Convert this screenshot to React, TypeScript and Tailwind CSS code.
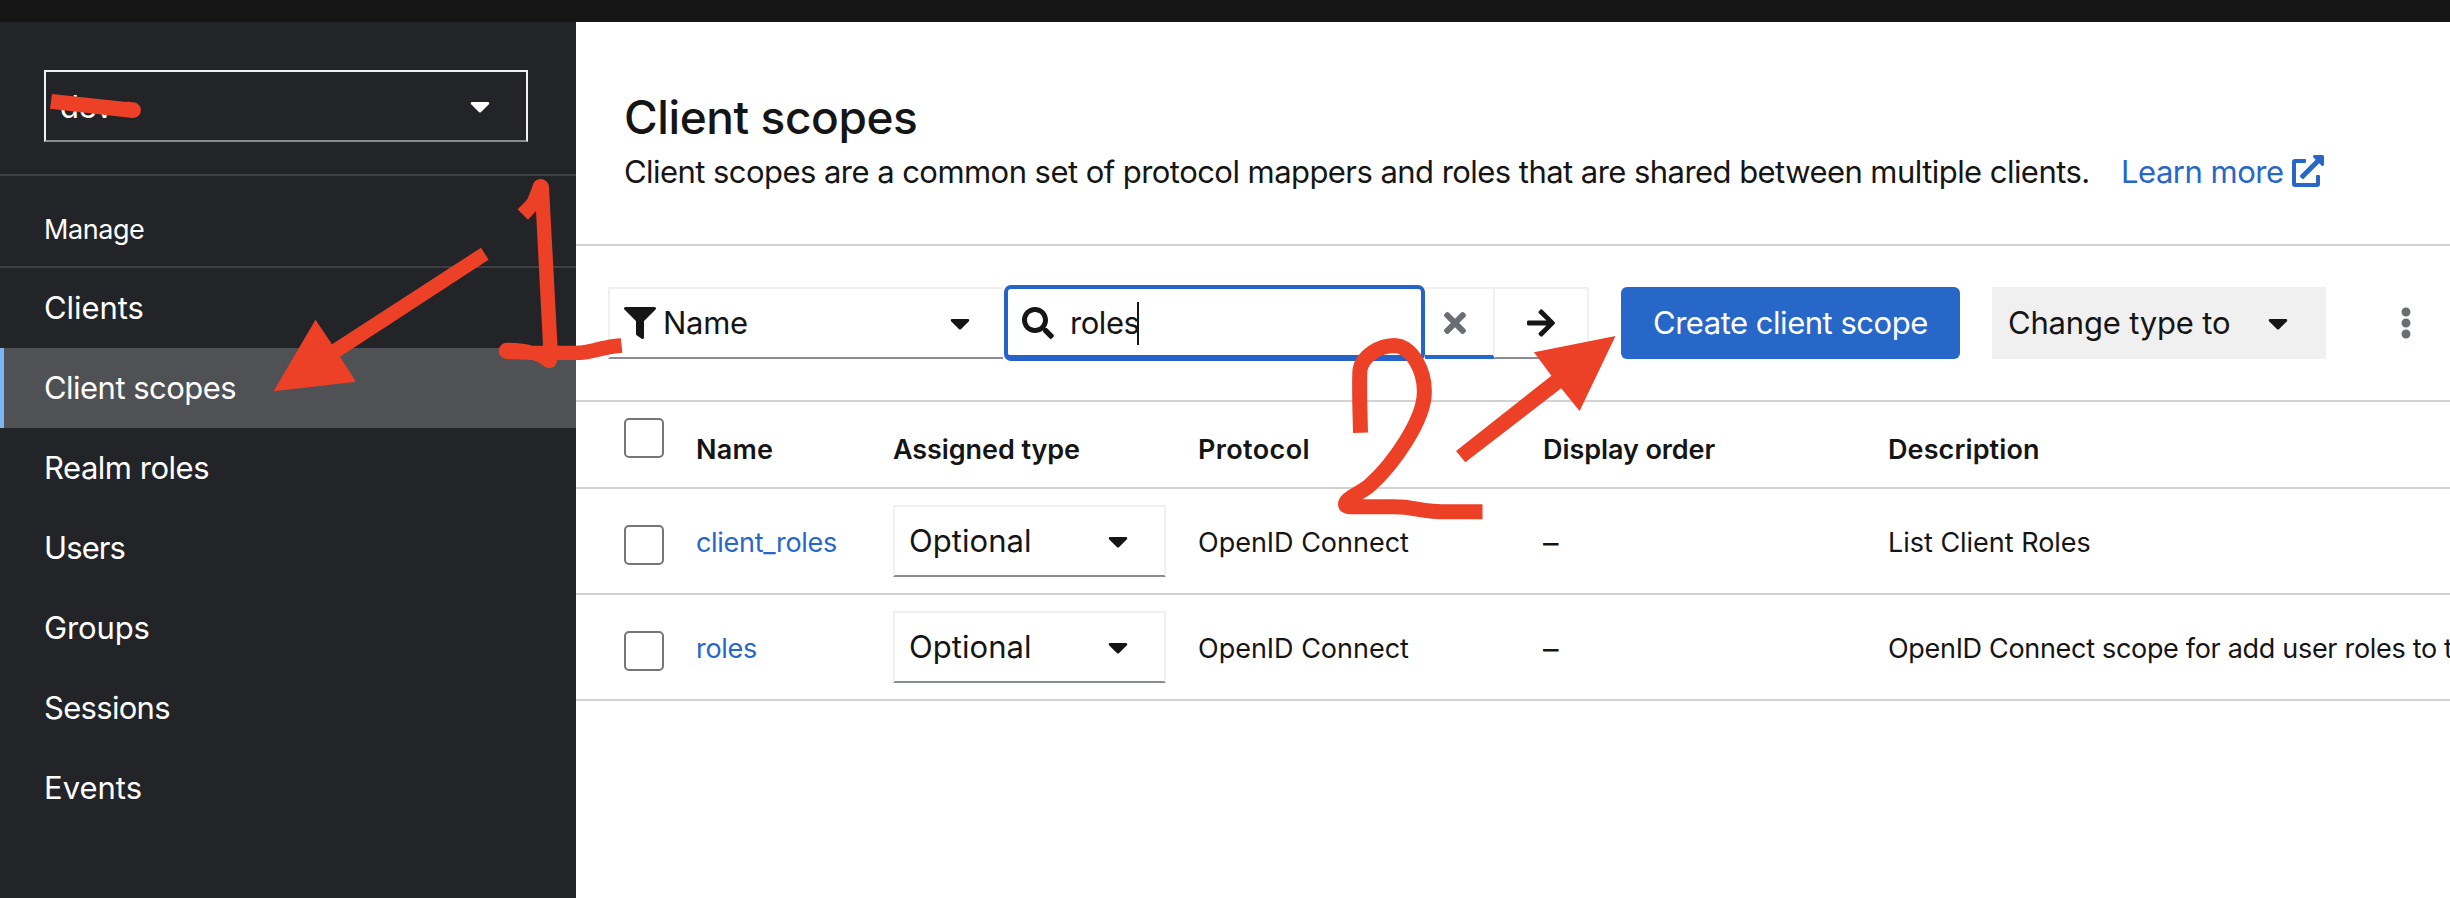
import type { ReactNode } from "react";
import {
  FaArrowRight,
  FaCaretDown,
  FaEllipsisV,
  FaExternalLinkAlt,
  FaFilter,
  FaSearch,
  FaTimes,
} from "react-icons/fa";

const navItems = [
  { label: "Clients", tracking: "tracking-[-0.05px]", active: false },
  { label: "Client scopes", tracking: "tracking-[-0.53px]", active: true },
  { label: "Realm roles", tracking: "tracking-[-0.48px]", active: false },
  { label: "Users", tracking: "tracking-[-0.9px]", active: false },
  { label: "Groups", tracking: "tracking-[-0.12px]", active: false },
  { label: "Sessions", tracking: "tracking-[-0.7px]", active: false },
  { label: "Events", tracking: "tracking-[0px]", active: false },
];

const scopes = [
  {
    name: "client_roles",
    description: "List Client Roles",
    descriptionTracking: "tracking-[-0.02px]",
  },
  {
    name: "roles",
    description: "OpenID Connect scope for add user roles to token",
    descriptionTracking: "tracking-[-0.31px]",
  },
];

function Caret() {
  return <FaCaretDown className="h-8 w-5 shrink-0" />;
}

function Checkbox({ className }: { className: string }) {
  return (
    <span
      role="checkbox"
      aria-checked="false"
      className={`size-10 rounded-[5px] border-2 border-[#767676] bg-white ${className}`}
    />
  );
}

function Cell({ children, className }: { children: ReactNode; className: string }) {
  return <div className={`whitespace-nowrap ${className}`}>{children}</div>;
}

function Sidebar() {
  return (
    <aside className="flex w-[576px] shrink-0 flex-col bg-[#232428] text-white">
      <div className="h-[154px] border-b-2 border-[#3e3f43] px-[44px] pt-12">
        <button className="flex h-[72px] w-[484px] items-center justify-between border-2 border-[#f0f0f0] border-b-[#8a8d90] pr-[36px] pl-[14px]">
          <span className="text-[31px] leading-none tracking-[-0.3px]">dev</span>
          <Caret />
        </button>
      </div>
      <div className="flex h-[92px] items-center border-b-2 border-[#3e3f43] pt-[18px] pl-[44px]">
        <span className="text-[27px] leading-10 tracking-[-0.44px]">Manage</span>
      </div>
      <nav>
        {navItems.map((item) => (
          <a
            key={item.label}
            className={`flex h-20 items-center text-[31px] leading-10 ${item.tracking} ${
              item.active ? "border-l-4 border-[#7bb5f3] bg-[#505154] pl-10" : "pl-[44px]"
            }`}
          >
            {item.label}
          </a>
        ))}
      </nav>
    </aside>
  );
}

function Toolbar() {
  return (
    <div className="flex h-[156px] items-start border-b-2 border-[#d2d2d2] pt-[41px] pl-8">
      <button className="flex h-[72px] w-[395px] items-center border-y-2 border-l-2 border-[#f0f0f0] border-b-[#8a8d90] pr-[33px] pl-[14px]">
        <FaFilter className="size-8" />
        <span className="ml-[7px] text-[31px] leading-10 tracking-[-0.31px]">Name</span>
        <span className="ml-auto flex">
          <Caret />
        </span>
      </button>
      <div className="-mt-0.5 ml-px flex h-[76px] w-[421px] items-center rounded-[7px] border-4 border-b-[6px] border-[#2563c8] pl-[14px]">
        <FaSearch className="mb-[-2px] size-8" />
        <span className="mb-[-2px] ml-4 text-[31px] leading-10 tracking-[-0.45px]">roles</span>
        <span className="mb-[-2px] -ml-0.5 h-[43px] w-0.5 bg-[#151515]" />
      </div>
      <button className="flex h-[72px] w-[70px] items-center border-t-2 border-r-2 border-b-4 border-[#f0f0f0] border-b-[#2668c9] pl-[19px] text-[#6a6e73]">
        <FaTimes className="mt-0.5 h-8 w-[22px]" />
      </button>
      <button className="flex h-[72px] w-[94px] items-center border-y-2 border-r-2 border-[#f0f0f0] border-b-[#8a8d90] pl-8">
        <FaArrowRight className="h-8 w-7" />
      </button>
      <button className="ml-8 flex h-[72px] w-[339px] items-center rounded-md bg-[#2767c8] pl-8 text-[31px] leading-10 tracking-[-0.48px] whitespace-nowrap text-white">
        Create client scope
      </button>
      <button className="ml-8 flex h-[72px] w-[334px] items-center justify-between bg-[#f0f0f0] pr-[38px] pl-4">
        <span className="text-[31px] leading-10 tracking-[-0.18px]">Change type to</span>
        <Caret />
      </button>
      <button className="ml-[74px] flex h-[72px] items-center text-[#6a6e73]">
        <FaEllipsisV className="h-8 w-3" />
      </button>
    </div>
  );
}

const columns = "grid grid-cols-[72px_197px_304px_346px_345px_1fr] border-b-2 border-[#d2d2d2] pl-12";

function ScopeTable() {
  return (
    <div className="text-[27px] leading-10">
      <div className={`${columns} h-[87px] items-start font-semibold`}>
        <Checkbox className="mt-4" />
        <Cell className="mt-7 tracking-[0.23px]">Name</Cell>
        <Cell className="mt-7 tracking-[-0.09px]">Assigned type</Cell>
        <Cell className="mt-7 pl-px tracking-[0.38px]">Protocol</Cell>
        <Cell className="mt-7 tracking-[-0.08px]">Display order</Cell>
        <Cell className="mt-7 tracking-[0.1px]">Description</Cell>
      </div>
      {scopes.map((scope) => (
        <div key={scope.name} className={`${columns} h-[106px] items-center`}>
          <Checkbox className="mt-2" />
          <Cell className="pt-[3px] tracking-[-0.31px] text-[#2767c8]">{scope.name}</Cell>
          <button className="flex h-[72px] w-[273px] items-center justify-between border-2 border-[#f0f0f0] border-b-[#8a8d90] pr-[36px] pl-[14px]">
            <span className="text-[31px] leading-10 tracking-[0.05px]">Optional</span>
            <Caret />
          </button>
          <Cell className="pt-[3px] pl-px tracking-[-0.01px]">OpenID Connect</Cell>
          <Cell className="pt-[3px] text-[31px]">–</Cell>
          <Cell className={`overflow-hidden pt-[3px] ${scope.descriptionTracking}`}>
            {scope.description}
          </Cell>
        </div>
      ))}
    </div>
  );
}

function Annotations() {
  return (
    <svg
      className="pointer-events-none absolute inset-0"
      width="2450"
      height="898"
      viewBox="0 0 2450 898"
      fill="#ec4126"
    >
      <path d="M52 94 L126.5 102 Q128 101 130 102 L133.5 102.3 A7.8 7.8 0 0 1 132.5 118 L50 108.7 Z" />
      <path d="M517.5 209.3 L525 202 Q528 199 529.5 194 L532.5 186 A8.3 8.3 0 0 1 549 187 L557.5 345.7 L575.5 345.7 C590 345.7 598 340 620.8 338.3 L622.4 352.7 C603 354 592 360 579.6 360 L557.5 360 Q556 368 549.5 367.9 Q545 367.9 541 364 Q536 360 528.6 359.8 L506 359 A8.2 8.2 0 0 1 506 342.7 Q525 343 532 345.7 L543 345.7 L536 211 L528 219.7 Z" />
      <path d="M273.5 391.3 L315.5 319.7 L332 344.3 L481 247.7 L488.6 259.7 L340 356.7 L356 381.7 Z" />
      <path
        d="M1360.5 432.7 C1359.8 405 1359 382 1360 370 C1362 356 1379 346 1394 345.6 C1412 346 1425 371 1424.3 393 C1424 419 1395 463 1369 486 C1357 495 1345.5 499 1345.5 504 C1345.5 507.5 1351 506.8 1361 506.8 L1394 506.8 C1418 506.8 1417 511.8 1450 511.8 L1482.5 511.8"
        fill="none"
        stroke="#ec4126"
        strokeWidth="15"
        strokeLinejoin="round"
      />
      <path d="M1615.5 336 L1534 352.3 L1551.4 375.7 L1456 451 L1465.3 462.3 L1561.2 388.3 L1579.6 411 Z" />
    </svg>
  );
}

export default function App() {
  return (
    <div className="relative flex h-[898px] w-[2450px] flex-col overflow-hidden bg-white font-['Inter',sans-serif] text-[#151515]">
      <header className="h-[22px] shrink-0 bg-[#151515]" />
      <div className="flex min-h-0 flex-1">
        <Sidebar />
        <main className="min-w-0 flex-1">
          <section className="h-[224px] border-b-2 border-[#d2d2d2] pt-[66px] pl-12">
            <h1 className="text-[46px] leading-[58px] font-medium tracking-[-0.42px]">Client scopes</h1>
            <div className="mt-1.5 flex items-center text-[31px] leading-10 whitespace-nowrap">
              <p className="w-[1497px] tracking-[-0.55px]">
                Client scopes are a common set of protocol mappers and roles that are shared between
                multiple clients.
              </p>
              <a className="flex items-center tracking-[-0.49px] text-[#2767c8]">
                Learn more
                <FaExternalLinkAlt className="mt-[-2px] ml-[8px] size-8" />
              </a>
            </div>
          </section>
          <Toolbar />
          <ScopeTable />
        </main>
      </div>
      <Annotations />
    </div>
  );
}
